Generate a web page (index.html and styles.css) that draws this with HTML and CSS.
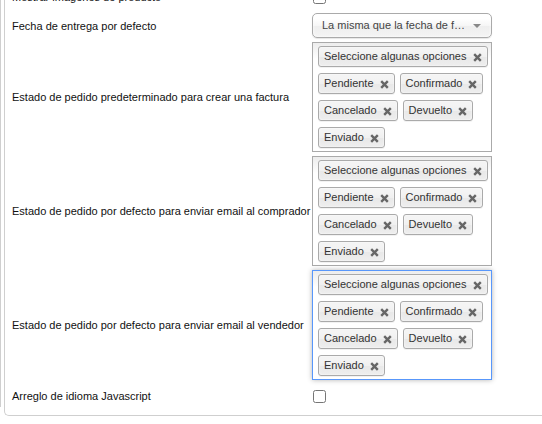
FILE: index.html
```html
<!DOCTYPE html>
<html>
<head>
<meta charset="utf-8">
<link rel="stylesheet" href="styles.css">
</head>
<body>
<div class="page">
  <div class="panel">
    <div class="row check-row">
      <div class="label">Mostrar imágenes de producto</div>
      <div class="value"><input type="checkbox" class="cb"></div>
    </div>
    <div class="row">
      <div class="label">Fecha de entrega por defecto</div>
      <div class="value">
        <div class="single">
          <span class="single-text">La misma que la fecha de factura</span>
          <span class="arrow"></span>
        </div>
      </div>
    </div>
    <div class="row">
      <div class="label">Estado de pedido predeterminado para crear una factura</div>
      <div class="value">
        <ul class="choices">
          <li class="chip">Seleccione algunas opciones<svg class="x" viewBox="0 0 9 9"><path d="M1.2 1.2L7.8 7.8M7.8 1.2L1.2 7.8"/></svg></li>
          <li class="chip">Pendiente<svg class="x" viewBox="0 0 9 9"><path d="M1.2 1.2L7.8 7.8M7.8 1.2L1.2 7.8"/></svg></li>
          <li class="chip">Confirmado<svg class="x" viewBox="0 0 9 9"><path d="M1.2 1.2L7.8 7.8M7.8 1.2L1.2 7.8"/></svg></li>
          <li class="chip">Cancelado<svg class="x" viewBox="0 0 9 9"><path d="M1.2 1.2L7.8 7.8M7.8 1.2L1.2 7.8"/></svg></li>
          <li class="chip">Devuelto<svg class="x" viewBox="0 0 9 9"><path d="M1.2 1.2L7.8 7.8M7.8 1.2L1.2 7.8"/></svg></li>
          <li class="chip">Enviado<svg class="x" viewBox="0 0 9 9"><path d="M1.2 1.2L7.8 7.8M7.8 1.2L1.2 7.8"/></svg></li>
        </ul>
      </div>
    </div>
    <div class="row">
      <div class="label">Estado de pedido por defecto para enviar email al comprador</div>
      <div class="value">
        <ul class="choices">
          <li class="chip">Seleccione algunas opciones<svg class="x" viewBox="0 0 9 9"><path d="M1.2 1.2L7.8 7.8M7.8 1.2L1.2 7.8"/></svg></li>
          <li class="chip">Pendiente<svg class="x" viewBox="0 0 9 9"><path d="M1.2 1.2L7.8 7.8M7.8 1.2L1.2 7.8"/></svg></li>
          <li class="chip">Confirmado<svg class="x" viewBox="0 0 9 9"><path d="M1.2 1.2L7.8 7.8M7.8 1.2L1.2 7.8"/></svg></li>
          <li class="chip">Cancelado<svg class="x" viewBox="0 0 9 9"><path d="M1.2 1.2L7.8 7.8M7.8 1.2L1.2 7.8"/></svg></li>
          <li class="chip">Devuelto<svg class="x" viewBox="0 0 9 9"><path d="M1.2 1.2L7.8 7.8M7.8 1.2L1.2 7.8"/></svg></li>
          <li class="chip">Enviado<svg class="x" viewBox="0 0 9 9"><path d="M1.2 1.2L7.8 7.8M7.8 1.2L1.2 7.8"/></svg></li>
        </ul>
      </div>
    </div>
    <div class="row">
      <div class="label">Estado de pedido por defecto para enviar email al vendedor</div>
      <div class="value">
        <ul class="choices active">
          <li class="chip">Seleccione algunas opciones<svg class="x" viewBox="0 0 9 9"><path d="M1.2 1.2L7.8 7.8M7.8 1.2L1.2 7.8"/></svg></li>
          <li class="chip">Pendiente<svg class="x" viewBox="0 0 9 9"><path d="M1.2 1.2L7.8 7.8M7.8 1.2L1.2 7.8"/></svg></li>
          <li class="chip">Confirmado<svg class="x" viewBox="0 0 9 9"><path d="M1.2 1.2L7.8 7.8M7.8 1.2L1.2 7.8"/></svg></li>
          <li class="chip">Cancelado<svg class="x" viewBox="0 0 9 9"><path d="M1.2 1.2L7.8 7.8M7.8 1.2L1.2 7.8"/></svg></li>
          <li class="chip">Devuelto<svg class="x" viewBox="0 0 9 9"><path d="M1.2 1.2L7.8 7.8M7.8 1.2L1.2 7.8"/></svg></li>
          <li class="chip">Enviado<svg class="x" viewBox="0 0 9 9"><path d="M1.2 1.2L7.8 7.8M7.8 1.2L1.2 7.8"/></svg></li>
        </ul>
      </div>
    </div>
    <div class="row check-row">
      <div class="label">Arreglo de idioma Javascript</div>
      <div class="value"><input type="checkbox" class="cb"></div>
    </div>
  </div>
</div>
</body>
</html>
```
FILE: styles.css
```css
html, body {
  margin: 0;
  padding: 0;
  background: #fff;
  overflow: hidden;
  height: 424px;
}
body {
  font-family: "Liberation Sans", Arial, sans-serif;
  font-size: 11px;
  color: #111;
}
.page {
  border-left: 1px solid #cfcfcf;
  padding-left: 3px;
  height: 424px;
}
.panel {
  margin-top: -17px;
  border-left: 1px solid #cfcfcf;
  border-bottom: 1px solid #cfcfcf;
  border-bottom-left-radius: 5px;
  padding: 0 0 5px 7px;
}
.row {
  display: grid;
  grid-template-columns: 300px 180px;
  align-items: center;
  padding: 2px 0;
}
.check-row {
  min-height: 24px;
}
.label {
  line-height: 14px;
}
.value {
  display: flex;
  align-items: center;
}
.cb {
  margin: 0 0 0 1px;
  width: 13px;
  height: 13px;
}
.single {
  position: relative;
  box-sizing: border-box;
  width: 180px;
  height: 25px;
  border: 1px solid #aaa;
  border-radius: 5px;
  background: linear-gradient(#ffffff 20%, #f6f6f6 50%, #eeeeee 52%, #f4f4f4 100%);
  box-shadow: inset 0 0 3px #fff, 0 1px 1px rgba(0,0,0,0.1);
  padding-left: 9px;
  color: #444;
  line-height: 23px;
}
.single-text {
  display: block;
  margin-right: 25px;
  white-space: nowrap;
  overflow: hidden;
  text-overflow: ellipsis;
}
.arrow {
  position: absolute;
  right: 10px;
  top: 10px;
  width: 0;
  height: 0;
  border-left: 4px solid transparent;
  border-right: 4px solid transparent;
  border-top: 4px solid #888;
}
.choices {
  box-sizing: border-box;
  width: 180px;
  height: 110px;
  margin: 0;
  padding: 3px 5px;
  list-style: none;
  border: 1px solid #aaa;
  background: linear-gradient(#eeeeee 1%, #ffffff 15%);
  display: flex;
  flex-wrap: wrap;
  align-content: flex-start;
  column-gap: 5px;
  row-gap: 6px;
}
.choices.active {
  border-color: #5897fb;
  box-shadow: 0 0 5px rgba(0,0,0,0.3);
}
.chip {
  position: relative;
  height: 13px;
  line-height: 13px;
  padding: 3px 20px 3px 5px;
  border: 1px solid #aaa;
  border-radius: 3px;
  color: #333;
  white-space: nowrap;
  background: linear-gradient(#f4f4f4 20%, #f0f0f0 50%, #e8e8e8 52%, #eeeeee 100%);
  box-shadow: inset 0 0 2px #fff, 0 1px 0 rgba(0,0,0,0.05);
}
.x {
  position: absolute;
  right: 5px;
  top: 6px;
  width: 9px;
  height: 9px;
  stroke: #666;
  stroke-width: 2.4;
  fill: none;
}
```
